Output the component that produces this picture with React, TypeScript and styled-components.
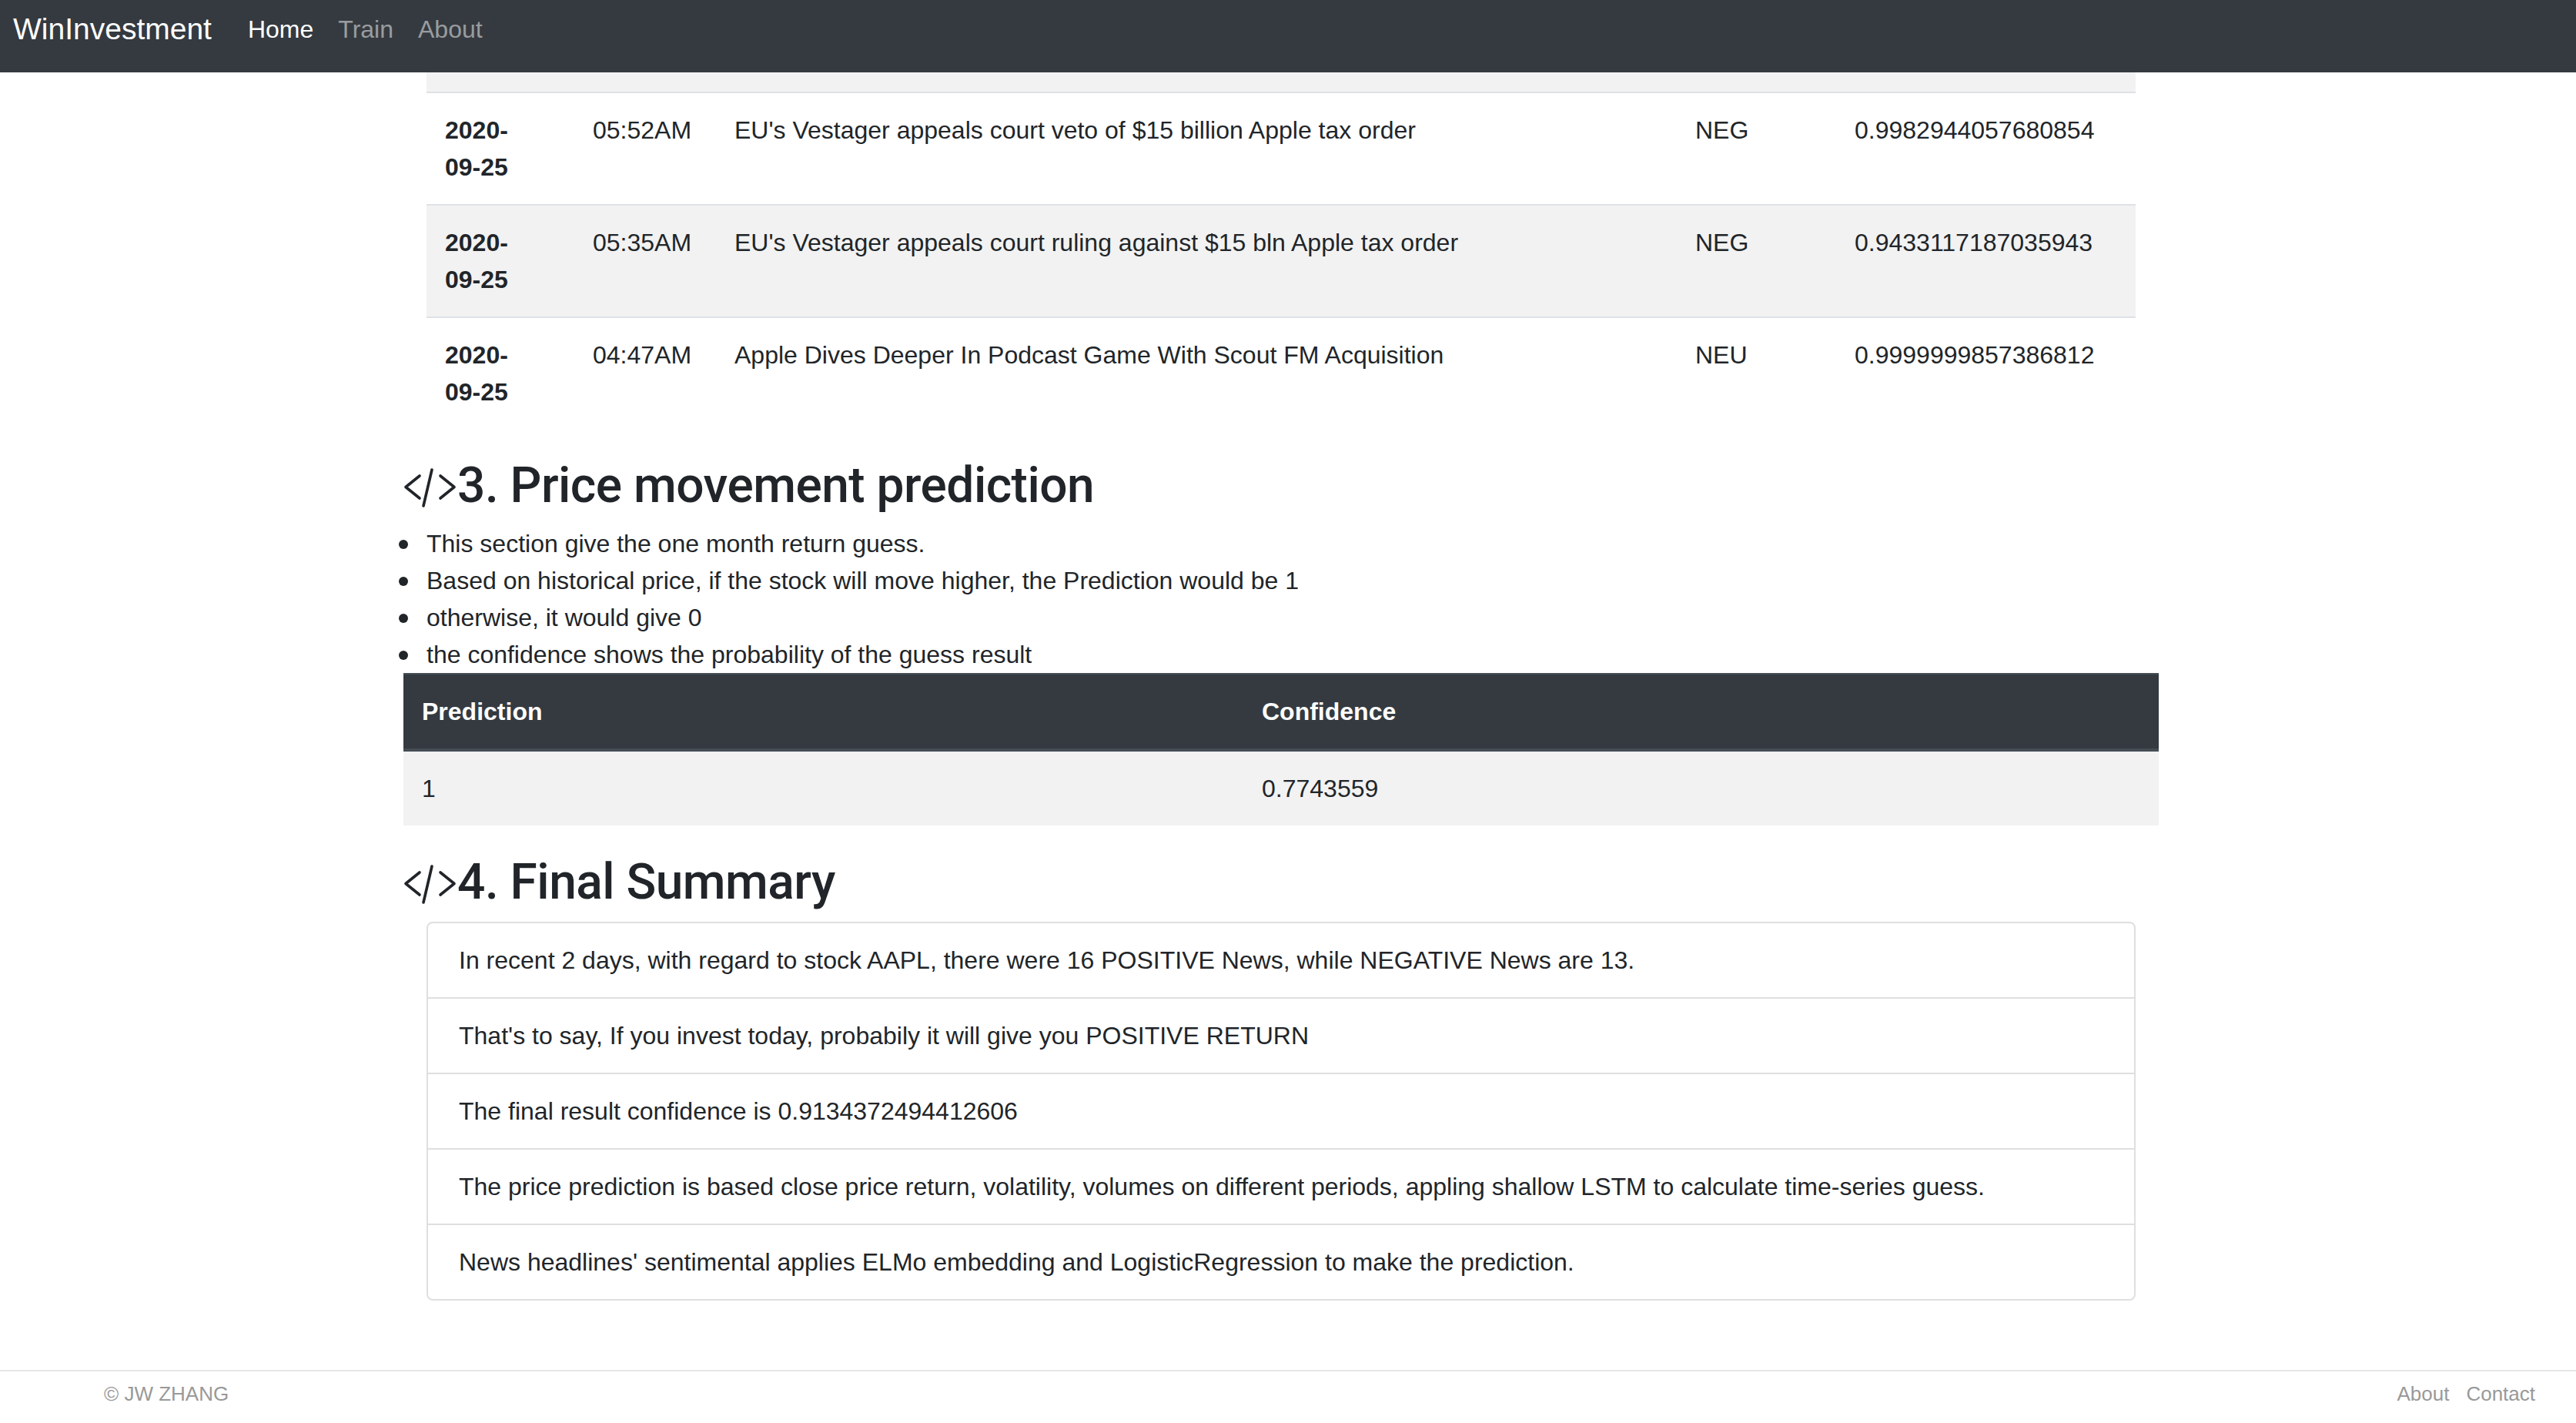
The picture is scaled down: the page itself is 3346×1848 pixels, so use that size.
import styled, { createGlobalStyle } from 'styled-components';

const GlobalStyle = createGlobalStyle`
  html, body {
    margin: 0;
    padding: 0;
  }

  body {
    font-family: "Liberation Sans", Arial, Helvetica, sans-serif;
    font-size: 32px;
    line-height: 1.5;
    color: #212529;
    background: #fff;
  }

  * {
    box-sizing: border-box;
  }
`;

const Page = styled.div`
  display: flex;
  flex-direction: column;
  min-height: 100vh;
`;

const Navbar = styled.nav`
  display: flex;
  align-items: center;
  height: 94px;
  padding: 8px 32px 26px 17px;
  background-color: #343a40;
`;

const Brand = styled.a`
  margin-right: 31px;
  font-size: 39px;
  line-height: 60px;
  color: #fff;
  text-decoration: none;
`;

const NavLink = styled.a<{ $active?: boolean }>`
  padding: 0 16px;
  font-size: 32px;
  line-height: 48px;
  color: ${(p) => (p.$active ? '#fff' : 'rgba(255, 255, 255, 0.5)')};
  text-decoration: none;
`;

const Body = styled.div`
  flex: 1;
  padding-right: 18px;
`;

const Main = styled.main`
  width: 2280px;
  margin: 0 auto;
  padding-bottom: 90px;
`;

const Table = styled.table`
  width: 100%;
  margin-bottom: 32px;
  border-collapse: collapse;
  table-layout: fixed;
  color: #212529;

  tbody tr:nth-of-type(odd) {
    background-color: #f2f2f2;
  }
`;

const NewsTable = styled(Table)`
  width: calc(100% - 60px);
  margin-left: 30px;
  margin-right: 30px;
`;

const Col = styled.col<{ $w: number }>`
  width: ${(p) => p.$w}px;
`;

const Cell = styled.td`
  padding: 24px;
  vertical-align: top;
  border-top: 2px solid #dee2e6;
`;

/* the date column is narrow enough that "2020-" and "09-25" land on two lines */
const DateCell = styled(Cell)`
  padding-right: 64px;
  font-weight: 700;
`;

const SliverCell = styled.td`
  height: 26px;
  padding: 0;
`;

const HeadCell = styled.th`
  padding: 24px;
  text-align: left;
  vertical-align: bottom;
  font-weight: 700;
  color: #fff;
  background-color: #343a40;
  border-top: 2px solid #454d55;
  border-bottom: 4px solid #454d55;
`;

const SectionTitle = styled.h2`
  display: flex;
  align-items: center;
  height: 81px;
  margin: 0 0 12px;
  padding-top: 4px;
  font-family: Roboto, "Liberation Sans", Arial, sans-serif;
  font-size: 64px;
  font-weight: 500;
  line-height: 1.2;
  letter-spacing: -0.5px;
  color: #212529;
`;

const BulletList = styled.ul`
  margin: 0;
  padding-left: 30px;
  list-style: none;
`;

const Bullet = styled.li`
  position: relative;
  line-height: 48px;

  &::before {
    content: '';
    position: absolute;
    left: -36px;
    top: 19px;
    width: 12px;
    height: 12px;
    border-radius: 50%;
    background: #212529;
  }
`;

const SummaryList = styled.ul`
  margin: 0 30px;
  padding: 0;
  list-style: none;
  border: 2px solid #dfdfdf;
  border-radius: 8px;
`;

const SummaryItem = styled.li`
  padding: 24px 40px;
  line-height: 48px;

  & + & {
    border-top: 2px solid #dfdfdf;
  }
`;

const Footer = styled.footer`
  display: flex;
  justify-content: space-between;
  align-items: flex-start;
  height: 70px;
  padding: 11px 53px 0 135px;
  border-top: 2px solid #e6e6e6;
  font-size: 26px;
  line-height: 36px;
  color: #999;
`;

const FooterLinks = styled.div`
  display: flex;
  gap: 22px;
`;

const FooterLink = styled.a`
  color: #999;
  text-decoration: none;
`;

function CodeIcon() {
  return (
    <svg width="70" height="77" viewBox="0 0 70 77" fill="none" stroke="#212529" strokeWidth="3.6" strokeLinecap="round" strokeLinejoin="round">
      <path d="M21 25 L3 39.5 L21 54" />
      <path d="M37 17 L26 64" />
      <path d="M48 25 L66 39.5 L48 54" />
    </svg>
  );
}

const news = [
  {
    date: '2020-09-25',
    time: '05:52AM',
    title: "EU's Vestager appeals court veto of $15 billion Apple tax order",
    sentiment: 'NEG',
    score: '0.9982944057680854',
  },
  {
    date: '2020-09-25',
    time: '05:35AM',
    title: "EU's Vestager appeals court ruling against $15 bln Apple tax order",
    sentiment: 'NEG',
    score: '0.9433117187035943',
  },
  {
    date: '2020-09-25',
    time: '04:47AM',
    title: 'Apple Dives Deeper In Podcast Game With Scout FM Acquisition',
    sentiment: 'NEU',
    score: '0.9999999857386812',
  },
];

const notes = [
  'This section give the one month return guess.',
  'Based on historical price, if the stock will move higher, the Prediction would be 1',
  'otherwise, it would give 0',
  'the confidence shows the probability of the guess result',
];

const summary = [
  'In recent 2 days, with regard to stock AAPL, there were 16 POSITIVE News, while NEGATIVE News are 13.',
  "That's to say, If you invest today, probabily it will give you POSITIVE RETURN",
  'The final result confidence is 0.9134372494412606',
  'The price prediction is based close price return, volatility, volumes on different periods, appling shallow LSTM to calculate time-series guess.',
  "News headlines' sentimental applies ELMo embedding and LogisticRegression to make the prediction.",
];

export default function App() {
  return (
    <Page>
      <GlobalStyle />

      <Navbar>
        <Brand href="#">WinInvestment</Brand>
        <NavLink href="#" $active>
          Home
        </NavLink>
        <NavLink href="#">Train</NavLink>
        <NavLink href="#">About</NavLink>
      </Navbar>

      <Body>
        <Main>
          <NewsTable>
            <colgroup>
              <Col $w={192} />
              <Col $w={184} />
              <Col $w={1248} />
              <Col $w={207} />
              <Col $w={389} />
            </colgroup>
            <tbody>
              <tr>
                <SliverCell colSpan={5} />
              </tr>
              {news.map((n) => (
                <tr key={n.time}>
                  <DateCell>{n.date}</DateCell>
                  <Cell>{n.time}</Cell>
                  <Cell>{n.title}</Cell>
                  <Cell>{n.sentiment}</Cell>
                  <Cell>{n.score}</Cell>
                </tr>
              ))}
            </tbody>
          </NewsTable>

          <SectionTitle>
            <CodeIcon />
            3. Price movement prediction
          </SectionTitle>
          <BulletList>
            {notes.map((n) => (
              <Bullet key={n}>{n}</Bullet>
            ))}
          </BulletList>

          <Table>
            <colgroup>
              <Col $w={1091} />
              <Col $w={1189} />
            </colgroup>
            <thead>
              <tr>
                <HeadCell>Prediction</HeadCell>
                <HeadCell>Confidence</HeadCell>
              </tr>
            </thead>
            <tbody>
              <tr>
                <Cell>1</Cell>
                <Cell>0.7743559</Cell>
              </tr>
            </tbody>
          </Table>

          <SectionTitle>
            <CodeIcon />
            4. Final Summary
          </SectionTitle>
          <SummaryList>
            {summary.map((s) => (
              <SummaryItem key={s}>{s}</SummaryItem>
            ))}
          </SummaryList>
        </Main>
      </Body>

      <Footer>
        <span>© JW ZHANG</span>
        <FooterLinks>
          <FooterLink href="#">About</FooterLink>
          <FooterLink href="#">Contact</FooterLink>
        </FooterLinks>
      </Footer>
    </Page>
  );
}
